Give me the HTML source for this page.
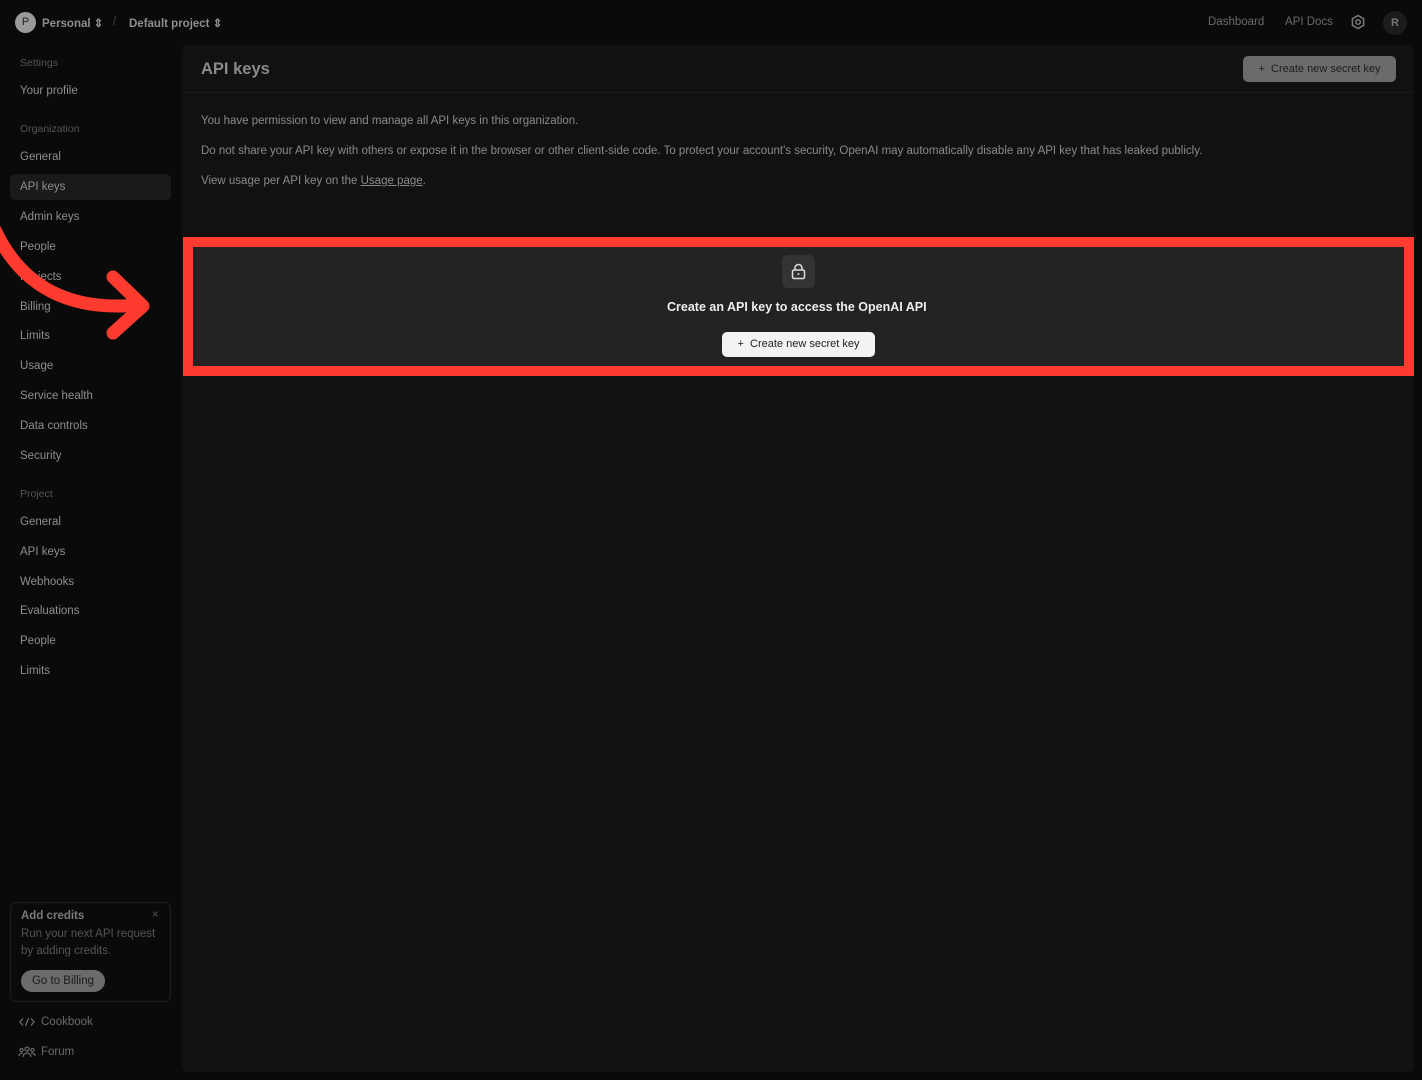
<!DOCTYPE html><html><head><style>
body{margin:0;width:1422px;height:1080px;background:#0a0a0a;font-family:"Liberation Sans",sans-serif;color:#9a9a9a;position:relative;overflow:hidden;font-size:11.5px}
.a{position:absolute;white-space:nowrap}
.nav{left:20px;font-size:11.5px;color:#8e8e8e}
.hdr{left:20px;font-size:10.5px;color:#555}
</style></head><body>
<div class="a" style="left:15px;top:12px;width:21px;height:21px;border-radius:50%;background:#9a9a9a;color:#222;text-align:center;line-height:21px;font-size:11px">P</div>
<div class="a" style="left:42px;top:16px;font-weight:bold;color:#8e8e8e">Personal ⇕</div>
<div class="a" style="left:113px;top:16px;color:#444">/</div>
<div class="a" style="left:129px;top:16px;font-weight:bold;color:#8e8e8e">Default project ⇕</div>
<div class="a" style="left:1208px;top:16px;color:#6a6a6a">Dashboard</div>
<div class="a" style="left:1285px;top:16px;color:#6a6a6a">API Docs</div>
<svg class="a" style="left:1350px;top:14px" width="16" height="16" viewBox="0 0 16 16"><polygon points="8,1.5 13.6,4.7 13.6,11.3 8,14.5 2.4,11.3 2.4,4.7" fill="none" stroke="#7a7a7a" stroke-width="1.5"/><circle cx="8" cy="8" r="2.3" fill="none" stroke="#7a7a7a" stroke-width="1.5"/></svg>
<div class="a" style="left:1383px;top:11px;width:24px;height:24px;border-radius:50%;background:#1c1c1c;color:#777;text-align:center;line-height:24px;font-weight:bold;font-size:11px">R</div>

<div class="a hdr" style="top:57px">Settings</div>
<div class="a nav" style="top:85px">Your profile</div>
<div class="a hdr" style="top:123px">Organization</div>
<div class="a nav" style="top:151px">General</div>
<div class="a" style="left:10px;top:174px;width:161px;height:26px;background:#1a1a1a;border-radius:5px"></div>
<div class="a nav" style="top:181px">API keys</div>
<div class="a nav" style="top:211px">Admin keys</div>
<div class="a nav" style="top:241px">People</div>
<div class="a nav" style="top:271px">Projects</div>
<div class="a nav" style="top:301px">Billing</div>
<div class="a nav" style="top:330px">Limits</div>
<div class="a nav" style="top:360px">Usage</div>
<div class="a nav" style="top:390px">Service health</div>
<div class="a nav" style="top:420px">Data controls</div>
<div class="a nav" style="top:450px">Security</div>
<div class="a hdr" style="top:488px">Project</div>
<div class="a nav" style="top:516px">General</div>
<div class="a nav" style="top:546px">API keys</div>
<div class="a nav" style="top:576px">Webhooks</div>
<div class="a nav" style="top:605px">Evaluations</div>
<div class="a nav" style="top:635px">People</div>
<div class="a nav" style="top:665px">Limits</div>

<div class="a" style="left:10px;top:902px;width:159px;height:98px;border:1px solid #1e1e1e;border-radius:6px"></div>
<div class="a" style="left:21px;top:910px;font-weight:bold;color:#7a7a7a">Add credits</div>
<div class="a" style="left:152px;top:909px;color:#555">×</div>
<div class="a" style="left:21px;top:926px;color:#555;line-height:17px">Run your next API request<br>by adding credits.</div>
<div class="a" style="left:21px;top:970px;width:84px;height:22px;border-radius:11px;background:#6b6b6b;color:#1a1a1a;text-align:center;line-height:22px">Go to Billing</div>
<svg class="a" style="left:19px;top:1017px" width="16" height="10" viewBox="0 0 16 10"><path d="M4 1.5L1 5l3 3.5M12 1.5L15 5l-3 3.5M9.5 1L6.5 9" fill="none" stroke="#6a6a6a" stroke-width="1.3"/></svg>
<div class="a" style="left:41px;top:1016px;color:#6a6a6a">Cookbook</div>
<svg class="a" style="left:18px;top:1046px" width="18" height="12" viewBox="0 0 18 12"><circle cx="9" cy="3" r="2" fill="none" stroke="#6a6a6a" stroke-width="1.2"/><circle cx="3.5" cy="4" r="1.6" fill="none" stroke="#6a6a6a" stroke-width="1.2"/><circle cx="14.5" cy="4" r="1.6" fill="none" stroke="#6a6a6a" stroke-width="1.2"/><path d="M5 11a4 4 0 0 1 8 0M0.8 10a3 3 0 0 1 4-2.5M17.2 10a3 3 0 0 0-4-2.5" fill="none" stroke="#6a6a6a" stroke-width="1.2"/></svg>
<div class="a" style="left:41px;top:1046px;color:#6a6a6a">Forum</div>

<div class="a" style="left:182px;top:45px;width:1232px;height:1027px;background:#111;border-radius:6px"></div>
<div class="a" style="left:182px;top:92px;width:1232px;height:1px;background:#1c1c1c"></div>
<div class="a" style="left:201px;top:60px;font-size:16.5px;font-weight:bold;color:#8a8a8a">API keys</div>
<div class="a" style="left:1243px;top:56px;width:153px;height:26px;border-radius:5px;background:#6b6b6b;color:#1c1c1c;line-height:26px;text-align:center;font-size:11px">+&nbsp; Create new secret key</div>
<div class="a" style="left:201px;top:115px;color:#8a8a8a">You have permission to view and manage all API keys in this organization.</div>
<div class="a" style="left:201px;top:145px;color:#8a8a8a">Do not share your API key with others or expose it in the browser or other client-side code. To protect your account's security, OpenAI may automatically disable any API key that has leaked publicly.</div>
<div class="a" style="left:201px;top:175px;color:#8a8a8a">View usage per API key on the <u>Usage page</u>.</div>

<div class="a" style="left:183px;top:237px;width:1211px;height:119px;border:10px solid #ff3b2f;background:#232323"></div>
<div class="a" style="left:782px;top:255px;width:33px;height:33px;border-radius:6px;background:#333"></div>
<svg class="a" style="left:790px;top:263px" width="17" height="17" viewBox="0 0 17 17"><rect x="2.5" y="7" width="12" height="8.5" rx="1.5" fill="none" stroke="#ddd" stroke-width="1.5"/><path d="M5 7V5a3.5 3.5 0 0 1 7 0v2" fill="none" stroke="#ddd" stroke-width="1.5"/><circle cx="8.5" cy="11" r="1" fill="#ddd"/></svg>
<div class="a" style="left:667px;top:300px;font-size:12.5px;font-weight:bold;color:#eee">Create an API key to access the OpenAI API</div>
<div class="a" style="left:722px;top:332px;width:153px;height:25px;border-radius:5px;background:#f3f3f3;color:#222;line-height:25px;text-align:center;font-size:11px">+&nbsp; Create new secret key</div>

<svg class="a" style="left:0;top:220px" width="160" height="130"><path d="M-5 10 Q35 95 138 85" fill="none" stroke="#ff3b2f" stroke-width="13" stroke-linecap="round"/><path d="M113 57 L143 86 L113 113" fill="none" stroke="#ff3b2f" stroke-width="13" stroke-linecap="round" stroke-linejoin="round"/></svg>
</body></html>
